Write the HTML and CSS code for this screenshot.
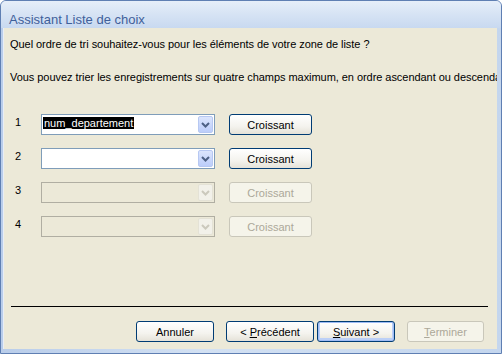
FILE: index.html
```html
<!DOCTYPE html>
<html lang="fr">
<head>
<meta charset="utf-8">
<title>Assistant Liste de choix</title>
<link rel="stylesheet" href="styles.css">
</head>
<body>
<div class="window">
  <div class="titlebar">Assistant Liste de choix</div>
  <div class="client">
    <p class="text first">Quel ordre de tri souhaitez-vous pour les éléments de votre zone de liste ?</p>
    <p class="text second">Vous pouvez trier les enregistrements sur quatre champs maximum, en ordre ascendant ou descendant.</p>

    <div class="sort-grid">
      <span class="num">1</span>
      <div class="combo">
        <span class="value"><span class="selected">num_departement</span></span>
        <span class="arrow"><svg width="9" height="6" viewBox="0 0 9 6"><path d="M1 1 L4.5 4.5 L8 1" fill="none" stroke="currentColor" stroke-width="2"/></svg></span>
      </div>
      <button class="btn">Croissant</button>

      <span class="num">2</span>
      <div class="combo">
        <span class="value"></span>
        <span class="arrow"><svg width="9" height="6" viewBox="0 0 9 6"><path d="M1 1 L4.5 4.5 L8 1" fill="none" stroke="currentColor" stroke-width="2"/></svg></span>
      </div>
      <button class="btn">Croissant</button>

      <span class="num">3</span>
      <div class="combo disabled">
        <span class="value"></span>
        <span class="arrow"><svg width="9" height="6" viewBox="0 0 9 6"><path d="M1 1 L4.5 4.5 L8 1" fill="none" stroke="currentColor" stroke-width="2"/></svg></span>
      </div>
      <button class="btn disabled">Croissant</button>

      <span class="num">4</span>
      <div class="combo disabled">
        <span class="value"></span>
        <span class="arrow"><svg width="9" height="6" viewBox="0 0 9 6"><path d="M1 1 L4.5 4.5 L8 1" fill="none" stroke="currentColor" stroke-width="2"/></svg></span>
      </div>
      <button class="btn disabled">Croissant</button>
    </div>

    <div class="footer">
      <div class="sep"></div>
      <div class="actions">
        <button class="btn w-annuler">Annuler</button>
        <button class="btn w-prec">&lt; <u>P</u>récédent</button>
        <button class="btn w-suiv default"><u>S</u>uivant &gt;</button>
        <button class="btn w-term disabled"><u>T</u>erminer</button>
      </div>
    </div>
  </div>
</div>
</body>
</html>
```

FILE: styles.css
```css
html, body {
  margin: 0;
  padding: 0;
  width: 502px;
  height: 354px;
  overflow: hidden;
  background: #ffffff;
}

.window {
  box-sizing: border-box;
  width: 502px;
  height: 354px;
  display: flex;
  flex-direction: column;
  border: 1px solid #5f7fb3;
  border-radius: 6px 6px 0 0;
  padding: 0 4px 4px 3px;
  background: linear-gradient(to right, #b9cdea, #d3e1f3 40%, #c4d6ee);
  font-family: "Liberation Sans", Arial, sans-serif;
  font-size: 11px;
  color: #000;
}

.titlebar {
  box-sizing: border-box;
  height: 27px;
  margin: 0 -4px 0 -3px;
  padding: 11px 0 0 8px;
  line-height: 15px;
  font-size: 13px;
  color: #3f609a;
  border-radius: 5px 5px 0 0;
  background: linear-gradient(to bottom, #e6eef9 0%, #d6e3f4 50%, #c8d9f0 100%);
}

.client {
  flex: 1;
  display: flex;
  flex-direction: column;
  background: #ece9d8;
  padding: 0 0 7px 6px;
  overflow: hidden;
  border-left: 1px solid #e9eef6;
  margin-left: -1px;
}

.text {
  margin: 0;
  line-height: 13px;
  white-space: nowrap;
  letter-spacing: -0.05px;
}

.first { margin-top: 10px; }
.second { margin-top: 20px; }

.sort-grid {
  margin-top: 30px;
  display: grid;
  grid-template-columns: 17px 174px 83px;
  grid-auto-rows: 21px;
  column-gap: 14px;
  row-gap: 13px;
  align-items: center;
}

.num {
  padding-left: 5px;
  padding-bottom: 4px;
  line-height: 13px;
}

.combo {
  box-sizing: border-box;
  height: 21px;
  display: flex;
  align-items: stretch;
  border: 1px solid #7f9db9;
  background: #ffffff;
  padding: 1px;
}

.combo .value {
  flex: 1;
  display: flex;
  align-items: center;
  padding-bottom: 3px;
}

.selected {
  background: #000000;
  color: #ffffff;
  line-height: 12px;
  padding: 0 1px 0 1px;
}

.arrow {
  box-sizing: border-box;
  width: 15px;
  display: flex;
  align-items: center;
  justify-content: center;
  border: 1px solid #b7c8f2;
  border-radius: 2px;
  background: linear-gradient(to bottom, #dbe5fd, #bccdfa);
  color: #4d6185;
}

.combo.disabled {
  border-color: #b0aea2;
  background: #ece9d8;
}

.combo.disabled .arrow {
  border-color: #e4e2d6;
  background: #f2f1ea;
  color: #cbc9bd;
}

.btn {
  box-sizing: border-box;
  height: 21px;
  padding: 0;
  margin: 0;
  font-family: "Liberation Sans", Arial, sans-serif;
  font-size: 11px;
  color: #000;
  border: 1px solid #003c74;
  border-radius: 3px;
  background: linear-gradient(to bottom, #ffffff 0%, #f4f3ee 60%, #e5e2d8 100%);
}

.btn.disabled {
  color: #aca899;
  border-color: #c9c7ba;
  background: #f5f4ea;
}

.btn.default {
  box-shadow: inset 0 0 0 1px #9fbcf5, inset 0 -1px 0 2px #bcd0f7;
}

.btn u {
  text-decoration: underline;
}

.footer {
  margin-top: auto;
}

.sep {
  height: 1px;
  background: #000000;
  margin: 0 9px 0 1px;
}

.actions {
  margin-top: 14px;
  display: flex;
  justify-content: flex-end;
  padding-right: 13px;
}

.w-annuler { width: 78px; }
.w-prec { width: 88px; margin-left: 12px; }
.w-suiv { width: 78px; margin-left: 3px; }
.w-term { width: 77px; margin-left: 12px; }
```
